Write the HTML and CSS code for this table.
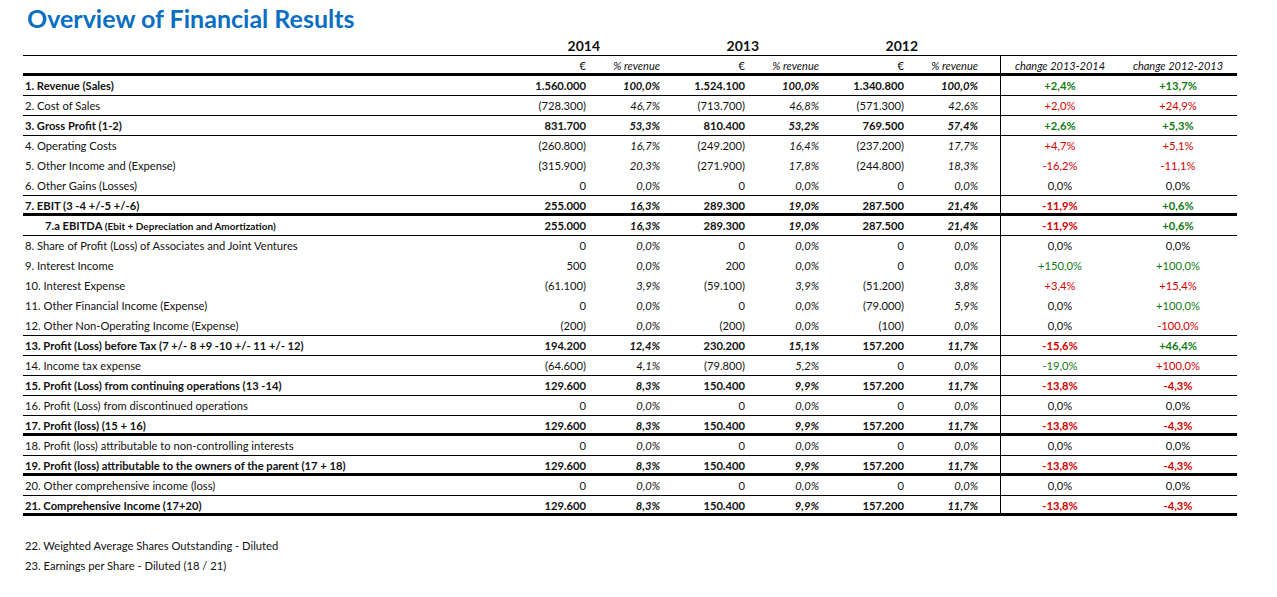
FILE: index.html
```html
<!DOCTYPE html>
<html lang="en">
<head>
<meta charset="utf-8">
<title>Overview of Financial Results</title>
<link rel="stylesheet" href="styles.css">
</head>
<body>
<div class="sheet">
  <h1 class="title">Overview of Financial Results</h1>

  <div class="row years">
    <div class="c"></div>
    <div class="c yr">2014</div><div class="c"></div>
    <div class="c yr">2013</div><div class="c"></div>
    <div class="c yr">2012</div><div class="c"></div>
    <div class="c"></div><div class="c"></div>
  </div>

  <div class="row units">
    <div class="c"></div>
    <div class="c num">€</div><div class="c pct sub">% revenue</div>
    <div class="c num">€</div><div class="c pct sub">% revenue</div>
    <div class="c num">€</div><div class="c pct sub last">% revenue</div>
    <div class="c chg sep sub">change 2013-2014</div><div class="c chg sub">change 2012-2013</div>
  </div>

  <div class="row b t1">
    <div class="c lbl">1. Revenue (Sales)</div>
    <div class="c num">1.560.000</div><div class="c pct">100,0%</div>
    <div class="c num">1.524.100</div><div class="c pct">100,0%</div>
    <div class="c num">1.340.800</div><div class="c pct last">100,0%</div>
    <div class="c chg sep g">+2,4%</div><div class="c chg g">+13,7%</div>
  </div>

  <div class="row t1">
    <div class="c lbl">2. Cost of Sales</div>
    <div class="c num">(728.300)</div><div class="c pct">46,7%</div>
    <div class="c num">(713.700)</div><div class="c pct">46,8%</div>
    <div class="c num">(571.300)</div><div class="c pct last">42,6%</div>
    <div class="c chg sep r">+2,0%</div><div class="c chg r">+24,9%</div>
  </div>

  <div class="row b t1">
    <div class="c lbl">3. Gross Profit (1-2)</div>
    <div class="c num">831.700</div><div class="c pct">53,3%</div>
    <div class="c num">810.400</div><div class="c pct">53,2%</div>
    <div class="c num">769.500</div><div class="c pct last">57,4%</div>
    <div class="c chg sep g">+2,6%</div><div class="c chg g">+5,3%</div>
  </div>

  <div class="row">
    <div class="c lbl">4. Operating Costs</div>
    <div class="c num">(260.800)</div><div class="c pct">16,7%</div>
    <div class="c num">(249.200)</div><div class="c pct">16,4%</div>
    <div class="c num">(237.200)</div><div class="c pct last">17,7%</div>
    <div class="c chg sep r">+4,7%</div><div class="c chg r">+5,1%</div>
  </div>

  <div class="row">
    <div class="c lbl">5. Other Income and (Expense)</div>
    <div class="c num">(315.900)</div><div class="c pct">20,3%</div>
    <div class="c num">(271.900)</div><div class="c pct">17,8%</div>
    <div class="c num">(244.800)</div><div class="c pct last">18,3%</div>
    <div class="c chg sep r">-16,2%</div><div class="c chg r">-11,1%</div>
  </div>

  <div class="row t1">
    <div class="c lbl">6. Other Gains (Losses)</div>
    <div class="c num">0</div><div class="c pct">0,0%</div>
    <div class="c num">0</div><div class="c pct">0,0%</div>
    <div class="c num">0</div><div class="c pct last">0,0%</div>
    <div class="c chg sep">0,0%</div><div class="c chg">0,0%</div>
  </div>

  <div class="row b t3">
    <div class="c lbl">7. EBIT (3 -4 +/-5 +/-6)</div>
    <div class="c num">255.000</div><div class="c pct">16,3%</div>
    <div class="c num">289.300</div><div class="c pct">19,0%</div>
    <div class="c num">287.500</div><div class="c pct last">21,4%</div>
    <div class="c chg sep r">-11,9%</div><div class="c chg g">+0,6%</div>
  </div>

  <div class="row b t1">
    <div class="c lbl indent">7.a EBITDA <span class="small">(Ebit + Depreciation and Amortization)</span></div>
    <div class="c num">255.000</div><div class="c pct">16,3%</div>
    <div class="c num">289.300</div><div class="c pct">19,0%</div>
    <div class="c num">287.500</div><div class="c pct last">21,4%</div>
    <div class="c chg sep r">-11,9%</div><div class="c chg g">+0,6%</div>
  </div>

  <div class="row">
    <div class="c lbl">8. Share of Profit (Loss) of Associates and Joint Ventures</div>
    <div class="c num">0</div><div class="c pct">0,0%</div>
    <div class="c num">0</div><div class="c pct">0,0%</div>
    <div class="c num">0</div><div class="c pct last">0,0%</div>
    <div class="c chg sep">0,0%</div><div class="c chg">0,0%</div>
  </div>

  <div class="row">
    <div class="c lbl">9. Interest Income</div>
    <div class="c num">500</div><div class="c pct">0,0%</div>
    <div class="c num">200</div><div class="c pct">0,0%</div>
    <div class="c num">0</div><div class="c pct last">0,0%</div>
    <div class="c chg sep g">+150,0%</div><div class="c chg g">+100,0%</div>
  </div>

  <div class="row">
    <div class="c lbl">10. Interest Expense</div>
    <div class="c num">(61.100)</div><div class="c pct">3,9%</div>
    <div class="c num">(59.100)</div><div class="c pct">3,9%</div>
    <div class="c num">(51.200)</div><div class="c pct last">3,8%</div>
    <div class="c chg sep r">+3,4%</div><div class="c chg r">+15,4%</div>
  </div>

  <div class="row">
    <div class="c lbl">11. Other Financial Income (Expense)</div>
    <div class="c num">0</div><div class="c pct">0,0%</div>
    <div class="c num">0</div><div class="c pct">0,0%</div>
    <div class="c num">(79.000)</div><div class="c pct last">5,9%</div>
    <div class="c chg sep">0,0%</div><div class="c chg g">+100,0%</div>
  </div>

  <div class="row t1">
    <div class="c lbl">12. Other Non-Operating Income (Expense)</div>
    <div class="c num">(200)</div><div class="c pct">0,0%</div>
    <div class="c num">(200)</div><div class="c pct">0,0%</div>
    <div class="c num">(100)</div><div class="c pct last">0,0%</div>
    <div class="c chg sep">0,0%</div><div class="c chg r">-100,0%</div>
  </div>

  <div class="row b t1">
    <div class="c lbl">13. Profit (Loss) before Tax (7 +/- 8 +9 -10 +/- 11 +/- 12)</div>
    <div class="c num">194.200</div><div class="c pct">12,4%</div>
    <div class="c num">230.200</div><div class="c pct">15,1%</div>
    <div class="c num">157.200</div><div class="c pct last">11,7%</div>
    <div class="c chg sep r">-15,6%</div><div class="c chg g">+46,4%</div>
  </div>

  <div class="row t1">
    <div class="c lbl">14. Income tax expense</div>
    <div class="c num">(64.600)</div><div class="c pct">4,1%</div>
    <div class="c num">(79.800)</div><div class="c pct">5,2%</div>
    <div class="c num">0</div><div class="c pct last">0,0%</div>
    <div class="c chg sep g">-19,0%</div><div class="c chg r">+100,0%</div>
  </div>

  <div class="row b t1">
    <div class="c lbl">15. Profit (Loss) from continuing operations (13 -14)</div>
    <div class="c num">129.600</div><div class="c pct">8,3%</div>
    <div class="c num">150.400</div><div class="c pct">9,9%</div>
    <div class="c num">157.200</div><div class="c pct last">11,7%</div>
    <div class="c chg sep r">-13,8%</div><div class="c chg r">-4,3%</div>
  </div>

  <div class="row t1">
    <div class="c lbl">16. Profit (Loss) from discontinued operations</div>
    <div class="c num">0</div><div class="c pct">0,0%</div>
    <div class="c num">0</div><div class="c pct">0,0%</div>
    <div class="c num">0</div><div class="c pct last">0,0%</div>
    <div class="c chg sep">0,0%</div><div class="c chg">0,0%</div>
  </div>

  <div class="row b t3">
    <div class="c lbl">17. Profit (loss) (15 + 16)</div>
    <div class="c num">129.600</div><div class="c pct">8,3%</div>
    <div class="c num">150.400</div><div class="c pct">9,9%</div>
    <div class="c num">157.200</div><div class="c pct last">11,7%</div>
    <div class="c chg sep r">-13,8%</div><div class="c chg r">-4,3%</div>
  </div>

  <div class="row t1">
    <div class="c lbl">18. Profit (loss) attributable to non-controlling interests</div>
    <div class="c num">0</div><div class="c pct">0,0%</div>
    <div class="c num">0</div><div class="c pct">0,0%</div>
    <div class="c num">0</div><div class="c pct last">0,0%</div>
    <div class="c chg sep">0,0%</div><div class="c chg">0,0%</div>
  </div>

  <div class="row b t3">
    <div class="c lbl">19. Profit (loss) attributable to the owners of the parent (17 + 18)</div>
    <div class="c num">129.600</div><div class="c pct">8,3%</div>
    <div class="c num">150.400</div><div class="c pct">9,9%</div>
    <div class="c num">157.200</div><div class="c pct last">11,7%</div>
    <div class="c chg sep r">-13,8%</div><div class="c chg r">-4,3%</div>
  </div>

  <div class="row t1">
    <div class="c lbl">20. Other comprehensive income (loss)</div>
    <div class="c num">0</div><div class="c pct">0,0%</div>
    <div class="c num">0</div><div class="c pct">0,0%</div>
    <div class="c num">0</div><div class="c pct last">0,0%</div>
    <div class="c chg sep">0,0%</div><div class="c chg">0,0%</div>
  </div>

  <div class="row b t3">
    <div class="c lbl">21. Comprehensive Income (17+20)</div>
    <div class="c num">129.600</div><div class="c pct">8,3%</div>
    <div class="c num">150.400</div><div class="c pct">9,9%</div>
    <div class="c num">157.200</div><div class="c pct last">11,7%</div>
    <div class="c chg sep r">-13,8%</div><div class="c chg r">-4,3%</div>
  </div>

  <div class="notes">
    <div class="note">22. Weighted Average Shares Outstanding - Diluted</div>
    <div class="note">23. Earnings per Share - Diluted (18 / 21)</div>
  </div>
</div>
</body>
</html>
```

FILE: styles.css
```css
html, body {
  margin: 0;
  padding: 0;
  background: #ffffff;
}

body {
  font-family: "Lato", "Liberation Sans", sans-serif;
  font-size: 11.2px;
  color: #111111;
}

.sheet {
  width: 1214px;
  padding-left: 23px;
}

.title {
  margin: 0;
  padding: 3px 0 0 4px;
  height: 30px;
  line-height: 30px;
  font-size: 25px;
  font-weight: 700;
  color: #0a6fc2;
}

.row {
  display: grid;
  grid-template-columns: 501px 85px 74px 85px 74px 85px 73px 119px 118px;
  box-sizing: border-box;
  height: 20px;
  align-items: stretch;
}

.c {
  line-height: 19px;
  white-space: nowrap;
  overflow: visible;
}

.row.b .c {
  font-weight: 700;
}

.row.t1 {
  border-bottom: 1px solid #000;
}

.row.t3 {
  border-bottom: 3px solid #000;
}

.years {
  height: 22px;
}

.years .c {
  line-height: 18px;
  padding-top: 4px;
}

.yr {
  font-size: 14px;
  font-weight: 700;
  text-align: right;
  padding-right: 9px;
}

.units {
  height: 21px;
  border-top: 1px solid #000;
  border-bottom: 3px solid #000;
}

.units .c {
  line-height: 16px;
  padding-top: 2px;
}

.sub {
  font-size: 11px;
}

.lbl {
  padding-left: 2px;
}

.lbl.indent {
  padding-left: 22px;
}

.small {
  font-size: 10px;
}

.num {
  text-align: right;
  padding-right: 23px;
}

.pct {
  text-align: right;
  padding-right: 23px;
  font-style: italic;
}

.pct.last {
  padding-right: 22px;
}

.chg {
  text-align: center;
}

.units .chg,
.units .pct {
  font-style: italic;
}

.sep {
  border-left: 1px solid #000;
}

.g {
  color: #117a11;
}

.r {
  color: #d00000;
}

.notes {
  padding-top: 20px;
}

.note {
  height: 20px;
  line-height: 19px;
  padding-left: 2px;
}
```
